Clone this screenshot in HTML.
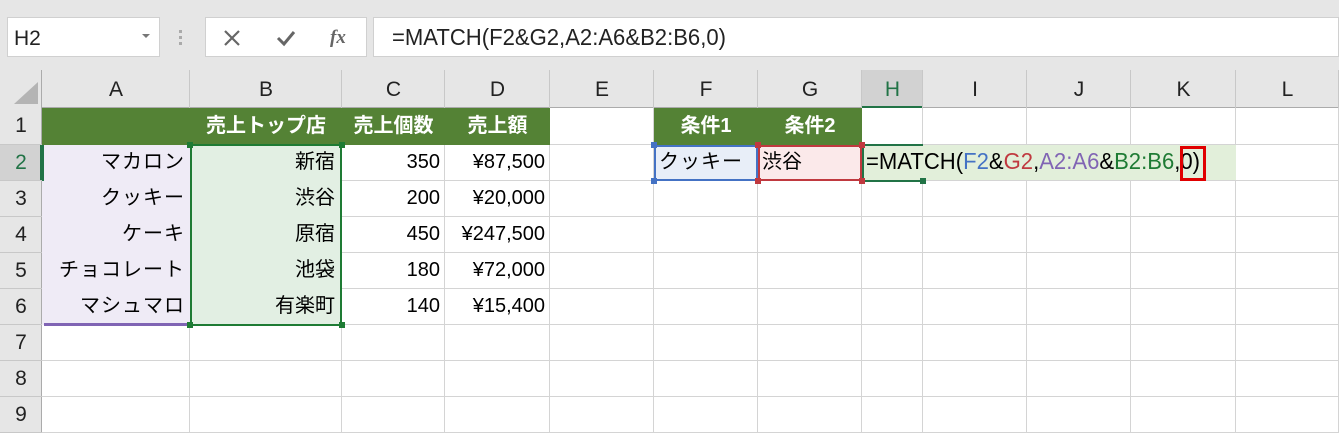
<!DOCTYPE html>
<html><head><meta charset="utf-8"><style>
*{margin:0;padding:0;box-sizing:border-box}
body{width:1339px;height:433px;overflow:hidden;background:#fff;position:relative;font-family:"Liberation Sans","Noto Sans CJK JP",sans-serif;color:#000}
.a{position:absolute}
.t{position:absolute;font-size:20px;line-height:36px;white-space:nowrap}
.r{text-align:right;padding-right:5px}
.c{text-align:center}
.hd{color:#fff;font-weight:bold}
.h{font-size:21px;color:#222}
.jp{letter-spacing:1px}
</style></head><body>
<div class="a" style="left:0;top:0;width:1339px;height:70px;background:#e6e6e6"></div>
<div class="a" style="left:7px;top:17px;width:153px;height:40px;background:#fff;border:1px solid #d0d0d0"></div>
<div class="t" style="left:14px;top:21px;font-size:21px;color:#222">H2</div>
<div class="a" style="left:142px;top:34px;width:0;height:0;border-left:4px solid transparent;border-right:4px solid transparent;border-top:4px solid #777"></div>
<div class="a" style="left:179px;top:30px;width:3px;height:3px;background:#aaa;box-shadow:0 6px #aaa,0 12px #aaa"></div>
<div class="a" style="left:205px;top:17px;width:162px;height:40px;background:#fff;border:1px solid #d0d0d0"></div>
<svg class="a" style="left:222px;top:28px" width="20" height="20"><path d="M3 3L17 17M17 3L3 17" stroke="#666" stroke-width="2.2"/></svg>
<svg class="a" style="left:275px;top:28px" width="22" height="20"><path d="M3 10L9 16L19 4" stroke="#666" stroke-width="3" fill="none"/></svg>
<div class="t" style="left:330px;top:20px;font-family:'Liberation Serif',serif;font-style:italic;font-weight:bold;font-size:19px;color:#666">fx</div>
<div class="a" style="left:373px;top:17px;width:966px;height:40px;background:#fff;border:1px solid #d0d0d0"></div>
<div class="t" style="left:392px;top:19px;font-size:23px;color:#222;transform:scaleX(0.96);transform-origin:left">=MATCH(F2&amp;G2,A2:A6&amp;B2:B6,0)</div>
<div class="a" style="left:0;top:70px;width:1339px;height:38px;background:#e6e6e6;border-bottom:1px solid #ababab"></div>
<div class="a" style="left:0;top:70px;width:42px;height:363px;background:#e6e6e6;border-right:1px solid #ababab"></div>
<svg class="a" style="left:10px;top:80px" width="30" height="26"><path d="M28 2L28 24L4 24Z" fill="#b4b4b4"/></svg>
<div class="a" style="left:862px;top:70px;width:61px;height:38px;background:#d2d2d2;border-bottom:2px solid #217346"></div>
<div class="a" style="left:0;top:145px;width:42px;height:36px;background:#d2d2d2;border-right:2px solid #217346"></div>
<div id="g"></div>
<script>
var cols=[42,190,342,445,550,654,758,862,923,1027,1131,1236,1339];
var L="ABCDEFGHIJKL",rows=[108,145,181,217,253,289,325,361,397,433];
var h='';
for(var i=0;i<12;i++){
 h+='<div class="a" style="left:'+(cols[i+1]-1)+'px;top:70px;width:1px;height:38px;background:#c8c8c8"></div>';
 h+='<div class="a" style="left:'+(cols[i+1]-1)+'px;top:108px;width:1px;height:325px;background:#d4d4d4"></div>';
 h+='<div class="t c h" style="left:'+cols[i]+'px;top:72px;width:'+(cols[i+1]-cols[i])+'px;'+(i==7?'color:#217346':'')+'">'+L[i]+'</div>';
}
for(var j=0;j<9;j++){
 h+='<div class="a" style="left:0;top:'+(rows[j+1]-1)+'px;width:42px;height:1px;background:#c8c8c8"></div>';
 h+='<div class="a" style="left:42px;top:'+(rows[j+1]-1)+'px;width:1297px;height:1px;background:#d4d4d4"></div>';
 h+='<div class="t c h" style="left:0;top:'+rows[j]+'px;width:42px;'+(j==1?'color:#217346':'')+'">'+(j+1)+'</div>';
}
document.getElementById('g').innerHTML=h;
</script>
<div class="a" style="left:42px;top:108px;width:508px;height:37px;background:#548235"></div>
<div class="a" style="left:654px;top:108px;width:208px;height:37px;background:#548235"></div>
<div class="a" style="left:42px;top:145px;width:148px;height:180px;background:#efebf6"></div>
<div class="a" style="left:44px;top:323px;width:146px;height:3px;background:#8064b4"></div>
<div class="a" style="left:42px;top:145px;width:2px;height:36px;background:#217346"></div>
<div class="a" style="left:190px;top:144px;width:152px;height:182px;background:#e2efe3;border:2px solid #1e7b34"></div>
<div class="a" style="left:654px;top:145px;width:104px;height:36px;background:#e8eef8;border:2px solid #4472c4"></div>
<div class="a" style="left:758px;top:145px;width:104px;height:36px;background:#fbe9ea;border:2px solid #c0393f"></div>
<div class="a" style="left:864px;top:145px;width:372px;height:35px;background:#e2efda"></div>
<div class="a" style="left:862px;top:144px;width:61px;height:38px;border:2px solid #217346;border-right:none"></div>
<div class="a" style="left:187px;top:142px;width:6px;height:6px;background:#1e7b34"></div>
<div class="a" style="left:339px;top:142px;width:6px;height:6px;background:#1e7b34"></div>
<div class="a" style="left:187px;top:322px;width:6px;height:6px;background:#1e7b34"></div>
<div class="a" style="left:339px;top:322px;width:6px;height:6px;background:#1e7b34"></div>
<div class="a" style="left:651px;top:142px;width:6px;height:6px;background:#4472c4"></div>
<div class="a" style="left:651px;top:178px;width:6px;height:6px;background:#4472c4"></div>
<div class="a" style="left:755px;top:142px;width:6px;height:6px;background:#c0393f"></div>
<div class="a" style="left:755px;top:178px;width:6px;height:6px;background:#c0393f"></div>
<div class="a" style="left:859px;top:142px;width:6px;height:6px;background:#c0393f"></div>
<div class="a" style="left:859px;top:178px;width:6px;height:6px;background:#c0393f"></div>
<div class="a" style="left:920px;top:178px;width:6px;height:6px;background:#217346"></div>
<div class="t c hd" style="left:190px;top:108px;width:152px">売上トップ店</div>
<div class="t c hd" style="left:342px;top:108px;width:103px">売上個数</div>
<div class="t c hd" style="left:445px;top:108px;width:105px">売上額</div>
<div class="t c hd" style="left:654px;top:108px;width:104px">条件1</div>
<div class="t c hd" style="left:758px;top:108px;width:104px">条件2</div>
<div class="t r jp" style="left:42px;top:144px;width:148px">マカロン</div>
<div class="t r jp" style="left:42px;top:180px;width:148px">クッキー</div>
<div class="t r jp" style="left:42px;top:216px;width:148px">ケーキ</div>
<div class="t r jp" style="left:42px;top:252px;width:148px">チョコレート</div>
<div class="t r jp" style="left:42px;top:288px;width:148px">マシュマロ</div>
<div class="t r" style="left:190px;top:144px;width:150px">新宿</div>
<div class="t r" style="left:190px;top:180px;width:150px">渋谷</div>
<div class="t r" style="left:190px;top:216px;width:150px">原宿</div>
<div class="t r" style="left:190px;top:252px;width:150px">池袋</div>
<div class="t r" style="left:190px;top:288px;width:150px">有楽町</div>
<div class="t r" style="left:342px;top:144px;width:103px">350</div>
<div class="t r" style="left:342px;top:180px;width:103px">200</div>
<div class="t r" style="left:342px;top:216px;width:103px">450</div>
<div class="t r" style="left:342px;top:252px;width:103px">180</div>
<div class="t r" style="left:342px;top:288px;width:103px">140</div>
<div class="t r" style="left:445px;top:144px;width:105px">¥87,500</div>
<div class="t r" style="left:445px;top:180px;width:105px">¥20,000</div>
<div class="t r" style="left:445px;top:216px;width:105px">¥247,500</div>
<div class="t r" style="left:445px;top:252px;width:105px">¥72,000</div>
<div class="t r" style="left:445px;top:288px;width:105px">¥15,400</div>
<div class="t jp" style="left:659px;top:144px">クッキー</div>
<div class="t" style="left:762px;top:144px">渋谷</div>
<div class="t" style="left:866px;top:143px;font-size:23px;transform:scaleX(0.96);transform-origin:left">=MATCH(<span style="color:#4472c4">F2</span>&amp;<span style="color:#c0393f">G2</span>,<span style="color:#8064b4">A2:A6</span>&amp;<span style="color:#1e7b34">B2:B6</span>,0)</div>
<div class="a" style="left:1180px;top:146px;width:26px;height:35px;border:3px solid #e00000"></div>
</body></html>
